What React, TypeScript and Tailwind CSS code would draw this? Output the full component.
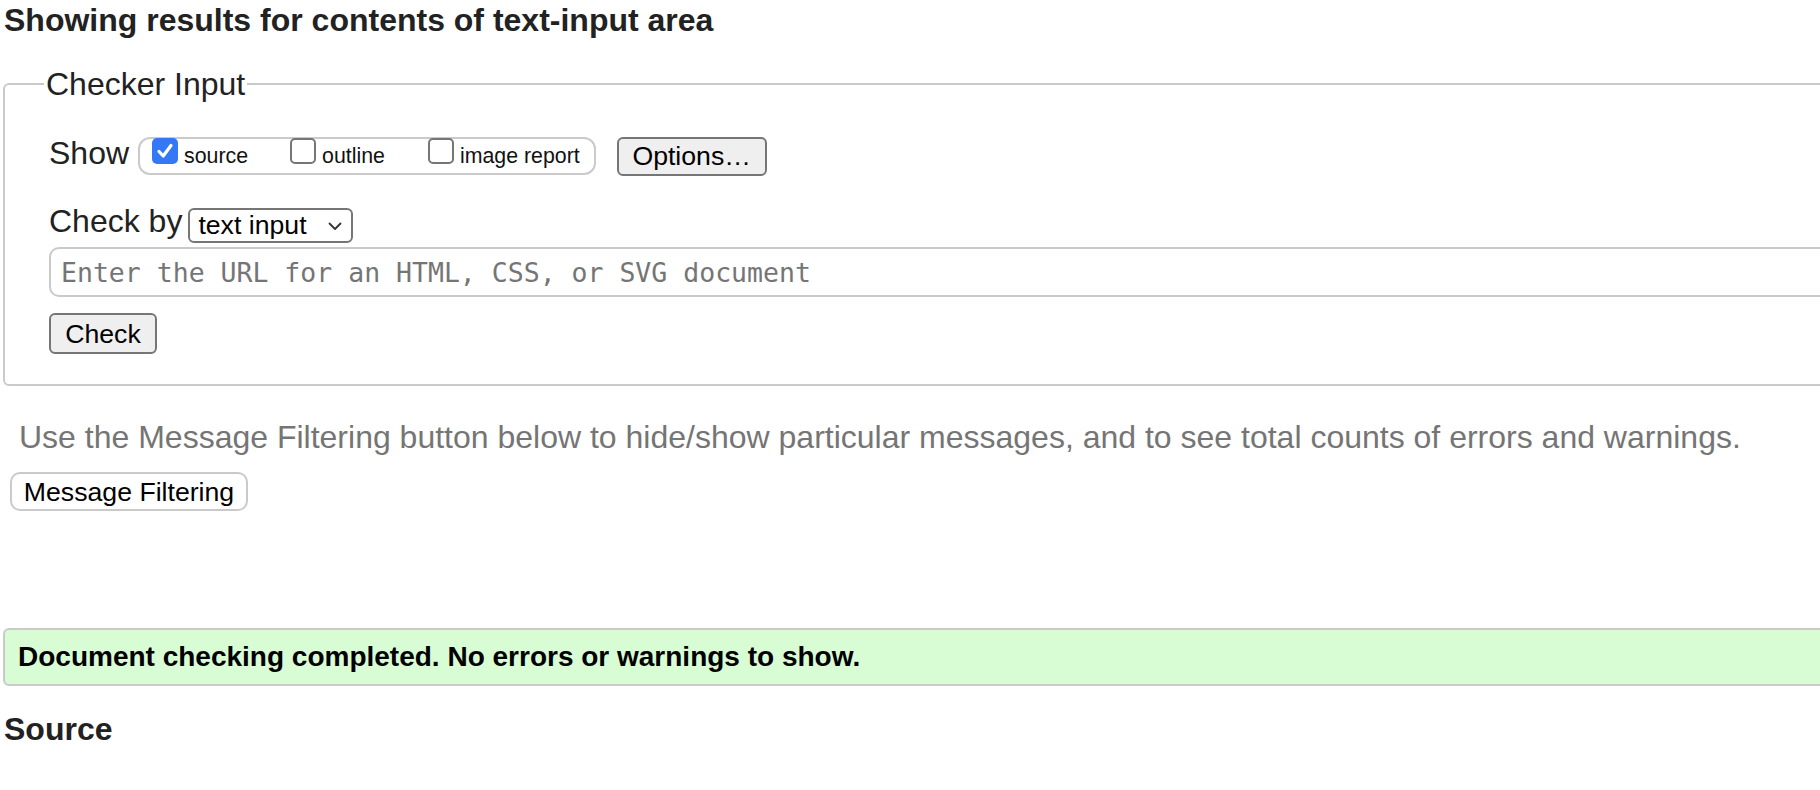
import { useState } from 'react';

const sans = "font-['Liberation_Sans',Arial,sans-serif]";

function CheckOption({ label, checked, onToggle, className = '' }: { label: string; checked: boolean; onToggle: () => void; className?: string }) {
  return (
    <label className={`flex items-start cursor-pointer ${className}`} onClick={onToggle}>
      {checked ? (
        <span className="mt-[-1px] w-[26px] h-[26px] rounded-[5px] bg-[#3478f6] flex items-center justify-center">
          <svg width="20" height="20" viewBox="0 0 20 20" fill="none">
            <path d="M4 10.5 L8.2 15 L16 4.5" stroke="white" strokeWidth="3.2" strokeLinecap="round" strokeLinejoin="round" />
          </svg>
        </span>
      ) : (
        <span className="mt-[-1px] w-[26px] h-[26px] rounded-[5px] border-2 border-[#767676] bg-white" />
      )}
      <span className="ml-[6px] mt-[1px] text-[21.33px] leading-[33px] text-[#111]">{label}</span>
    </label>
  );
}

export default function App() {
  const [show, setShow] = useState({ source: true, outline: false, image: false });

  return (
    <div className={`w-[1820px] h-[790px] overflow-hidden bg-white text-[#222] ${sans}`}>
      <h2 className="pt-[2px] pl-[4px] text-[32px] leading-[36px] font-bold">Showing results for contents of text-input area</h2>

      <fieldset className="mt-[28px] ml-[3px] w-[1880px] border-2 border-[#cacaca] rounded-[6px] pt-[35px] pb-[30px] pl-[44px]">
        <legend className="ml-[-5px] px-[2px] text-[32px] leading-[36px]">Checker Input</legend>

        <div className="flex items-start h-[39px]">
          <span className="mt-[1px] text-[32px] leading-[30px]">Show</span>
          <div className="ml-[9px] h-[38px] flex items-start border-2 border-[#cacaca] rounded-[12px] pl-[12px] pr-[14px]">
            <CheckOption label="source" checked={show.source} onToggle={() => setShow({ ...show, source: !show.source })} />
            <CheckOption className="ml-[42px]" label="outline" checked={show.outline} onToggle={() => setShow({ ...show, outline: !show.outline })} />
            <CheckOption className="ml-[43px]" label="image report" checked={show.image} onToggle={() => setShow({ ...show, image: !show.image })} />
          </div>
          <button className="ml-[21px] w-[150px] h-[39px] bg-[#efefef] border-2 border-[#767676] rounded-[6px] text-[26.67px] text-black flex items-center justify-center pb-[2px]">
            Options…
          </button>
        </div>

        <div className="mt-[32px] flex items-start">
          <span className="text-[32px] leading-[26px]">Check by</span>
          <div className="ml-[6px] w-[165px] h-[35px] border-2 border-[#767676] rounded-[6px] bg-white flex items-center justify-between pl-[8px] pr-[9px] pb-[2px]">
            <span className="text-[26.67px] text-black">text input</span>
            <svg width="14" height="9" viewBox="0 0 14 9" fill="none" className="mt-[3px]">
              <path d="M1.5 1.5 L7 7 L12.5 1.5" stroke="#333" strokeWidth="1.8" strokeLinecap="round" strokeLinejoin="round" />
            </svg>
          </div>
        </div>

        <input
          className="mt-[4px] block h-[50px] w-[1860px] border-2 border-[#cacaca] rounded-[10px] pl-[10px] font-['DejaVu_Sans_Mono',monospace] text-[26.5px] placeholder:text-[#757575] outline-none"
          placeholder="Enter the URL for an HTML, CSS, or SVG document"
        />

        <button className="mt-[16px] w-[108px] h-[41px] bg-[#efefef] border-2 border-[#767676] rounded-[6px] text-[26.67px] text-black flex items-center justify-center">
          Check
        </button>
      </fieldset>

      <p className="mt-[33px] pl-[19px] text-[32px] leading-[36px] text-[#757575]">
        Use the Message Filtering button below to hide/show particular messages, and to see total counts of errors and warnings.
      </p>

      <button className="ml-[10px] mt-[17px] w-[238px] h-[39px] bg-white border-2 border-[#cacaca] rounded-[10px] text-[26.67px] text-black flex items-center justify-center">
        Message Filtering
      </button>

      <div className="mt-[117px] ml-[3px] w-[1880px] h-[58px] bg-[#d8fcd4] border-2 border-[#cacaca] rounded-[6px] flex items-center pl-[13px] text-[28px] font-bold text-black">
        Document checking completed. No errors or warnings to show.
      </div>

      <h2 className="mt-[25px] pl-[4px] text-[32px] leading-[36px] font-bold">Source</h2>
    </div>
  );
}
